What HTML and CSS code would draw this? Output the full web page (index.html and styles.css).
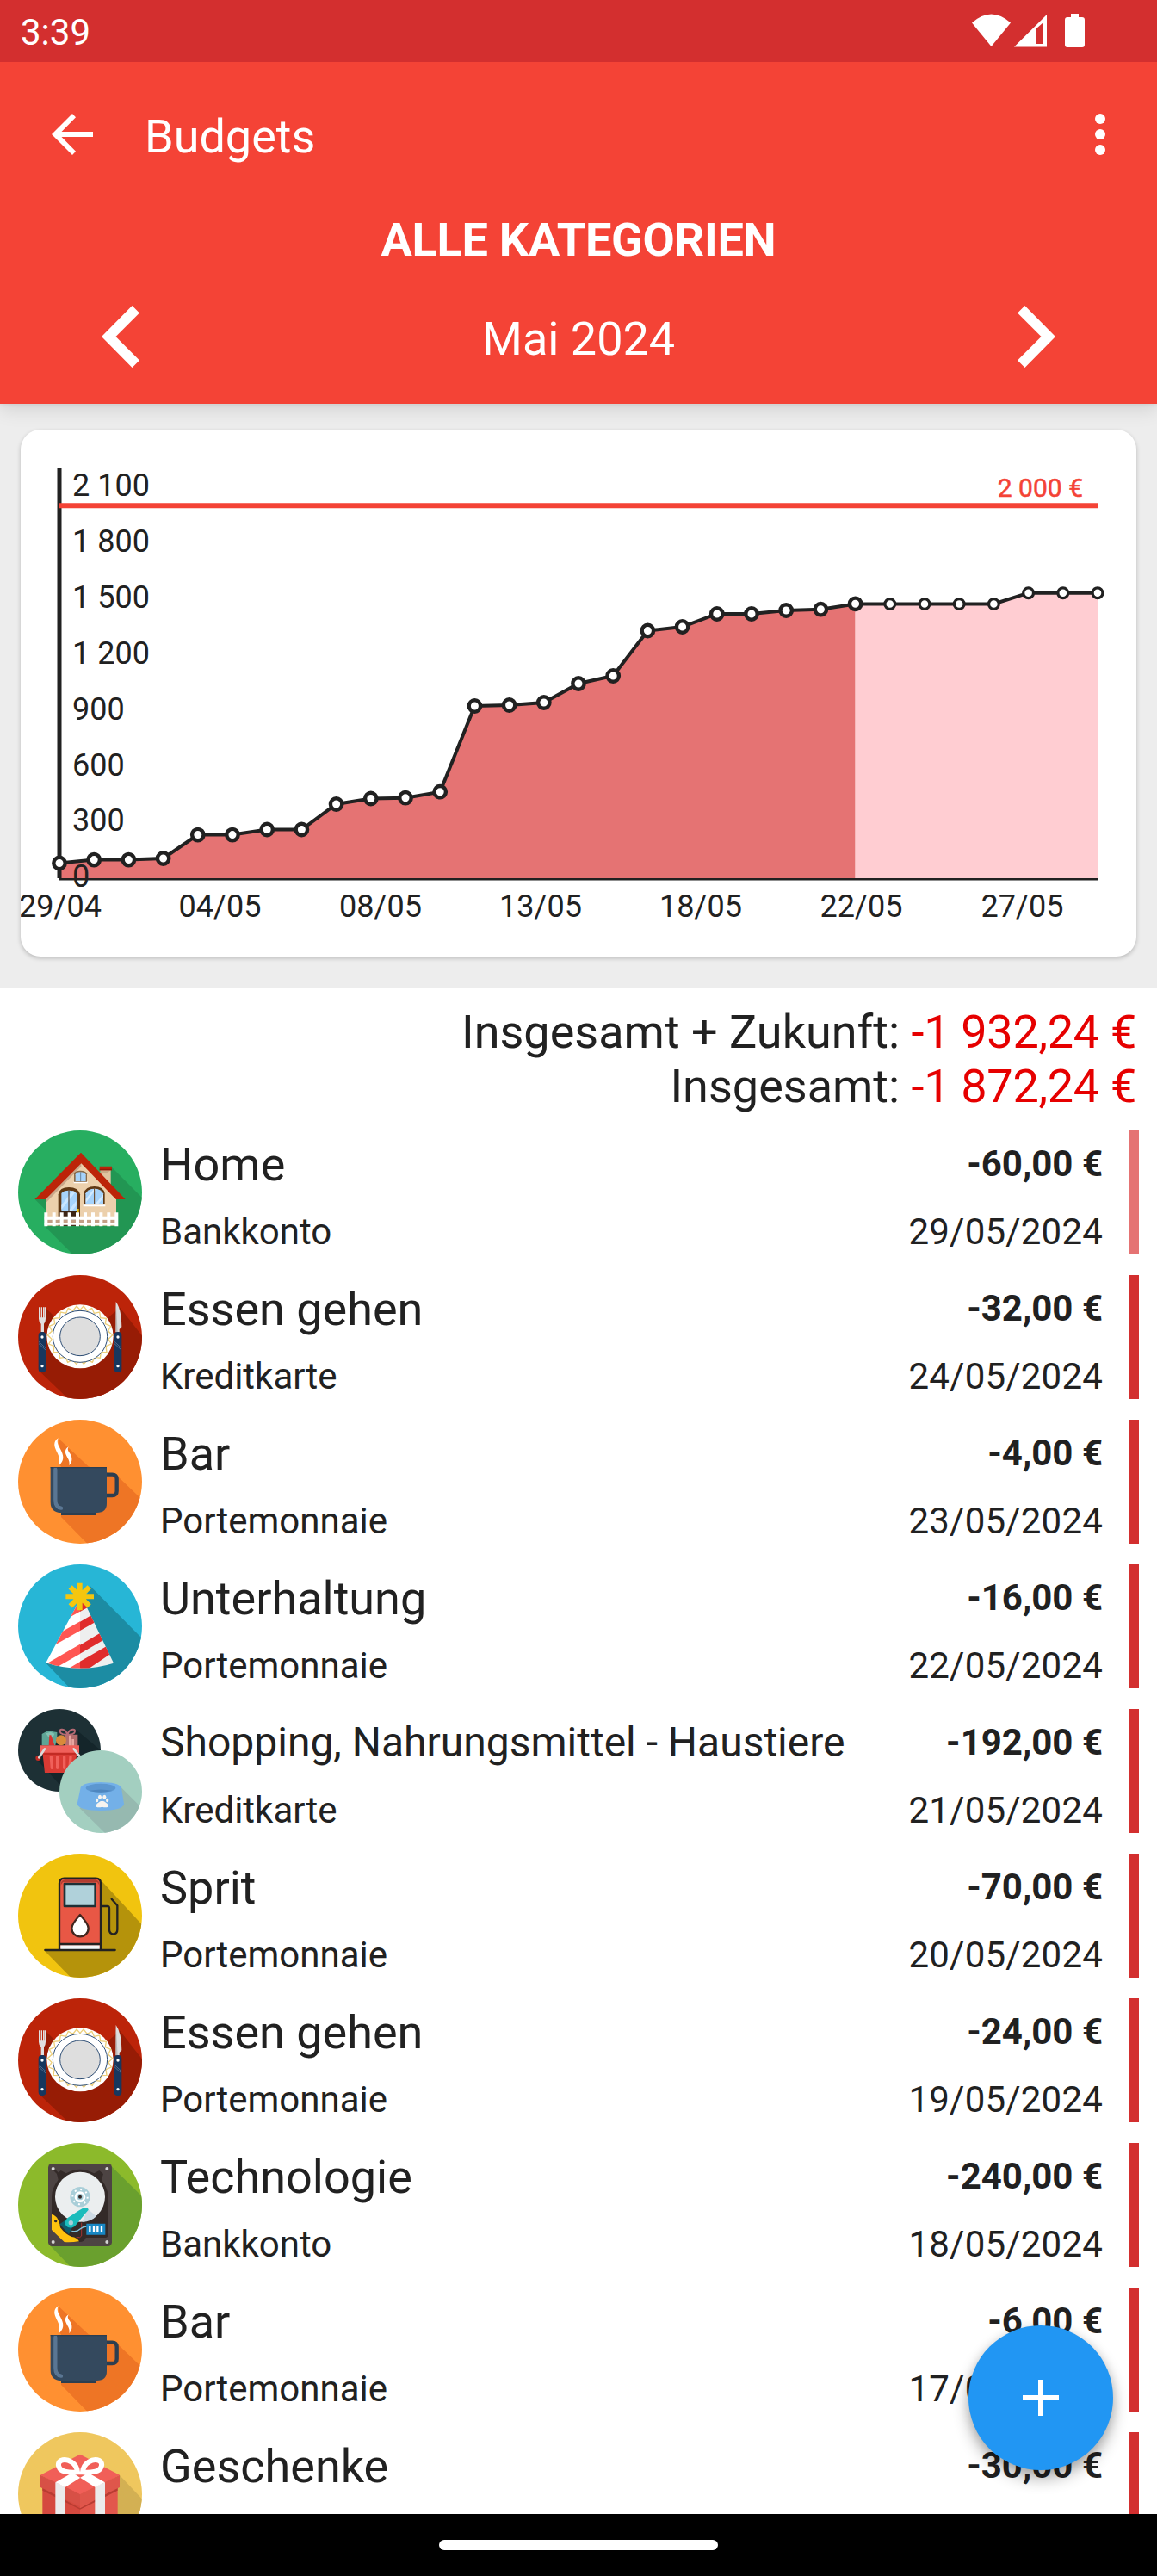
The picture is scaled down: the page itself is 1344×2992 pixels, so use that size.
FILE: index.html
```
<!DOCTYPE html>
<html lang="de">
	<head>
		<meta charset="utf-8">
		<title>Budgets</title>
		<link rel="stylesheet" href="styles.css">
	</head>
	<body>

		<!-- category icons -->
		<svg class="sprite">
			<symbol id="home" viewBox="63 39 432 432">
				<path fill="#27ae60" d="M63 39h432v432H63z"/>
				<path fill="#229653" d="M122 279l38 38v60l-5-5 105 105h240V278L388 166l-40 40z"/>
				<path fill="#e0c4a0" d="M350 176h36v52l-36-34z"/>
				<path fill="#c9ab88" d="M350 178h36l-16 12-20-4z"/>
				<path fill="#bc2409" d="M347 164h43v14h-43z"/>
				<path fill="#8f1c08" d="M347 173h43v5h-43z"/>
				<path fill="#ecd0ac" d="M283 150L160 273v98h245v-98z"/>
				<path fill="#c9a78a" d="M283 152L160 277v14l123-127z"/>
				<path fill="#bc2409" d="M282 116L121 279h38L283 154l121 125h33z"/>
				<path fill="#603813" d="M203 371V262q4-25 37-25t39 25v109z"/>
				<path fill="#3c2415" d="M209 320h65v51h-65z"/>
				<path fill="#a6d3fb" d="M214 320v-62q7-10 26-10t27 10v62z"/>
				<path fill="#c9e6ff" d="M214 300l38-50 12 3-50 62zM238 320l28-36v16l-16 20z"/>
				<path fill="none" stroke="#3c2415" stroke-width="3" d="M240 249v71"/>
				<path fill="#f1c40f" d="M269 312h6v14h-6z"/>
				<path fill="#603813" d="M292 298v-40q6-24 37-24t36 24v40z"/>
				<path fill="#a6d3fb" d="M298 294v-35q8-17 31-17t31 17v35z"/>
				<path fill="#d2eaff" d="M299 278l28-36 8 1-36 48zM333 294l27-32v12l-16 20z"/>
				<path fill="none" stroke="#603813" stroke-width="3" d="M329 241v54"/>
				<path fill="#fff" d="M290 298h77v6h-77zM257 217h48v6h-48z"/>
				<path fill="#8a6a48" d="M258 218v-28q3-11 22-11t23 11v28z"/>
				<path fill="#a6d3fb" d="M263 216v-23q3-9 17-9t19 9v23z"/>
				<path fill="none" stroke="#4d5d6b" stroke-width="2" d="M281 184v33"/>
				<path fill="#c49f86" d="M165 350h238v10H165z"/>
				<path fill="#fff" d="M155 338h256v12H155zM155 360h256v8H155z"/>
				<path fill="none" stroke="#fff" stroke-width="12" d="M160 325v48M188 325v48M215 325v48M242 325v48M270 325v48M297 325v48M324 325v48M352 325v48M379 325v48M406 325v48"/>
			</symbol>

			<symbol id="dining" viewBox="63 543 432 432">
				<path fill="#bc2409" d="M63 543h432v432H63z"/>
				<path fill="#971c05" d="M158 656l120 120 140-120 82 105v230H255L138 878z"/>
				<path fill="#e0e0e0" d="M135 655h5v36h3v-36h4v36h3v-36h4v36h1v-36h4v40q0 12-6 18v28h-10v-28q-8-6-8-18z"/>
				<path fill="#ddd" d="M404 636q20 28 20 88l-8 8v10h-12z"/>
				<path fill="#bbb" d="M404 636l6 106h-7z"/>
				<rect x="134" y="741" width="26" height="141" rx="12" fill="#17375e"/>
				<rect x="398" y="741" width="26" height="141" rx="12" fill="#17375e"/>
				<path stroke="#7187a3" stroke-width="2" d="M135 775l24 22M135 782l24 22M399 775l24 22M399 782l24 22"/>
				<g fill="#fff"><circle cx="147" cy="759" r="5"/><circle cx="147" cy="860" r="5"/><circle cx="411" cy="759" r="5"/><circle cx="411" cy="860" r="5"/></g>
				<ellipse cx="279" cy="757" rx="116" ry="111" fill="#fff"/>
				<path fill="none" stroke="#edcf7a" stroke-width="4" d="M279 664l12-13 13 16 16-9 8 18 19-4 3 20 20 2-3 19 19 8-9 17 15 14-14 14 10 17-19 8 3 20-20 1-3 20-19-3-8 18-17-8-13 14-13-14-13 14-13-14-17 8-8-18-19 3-3-20-20-1 3-20-19-8 10-17-14-14 15-14-9-17 19-8-3-19 20-2 3-20 19 4 8-18 16 9 13-16z"/>
				<ellipse cx="279" cy="757" rx="95" ry="90" fill="#fff" stroke="#2d4d74" stroke-width="3"/>
				<ellipse cx="279" cy="757" rx="70" ry="67" fill="#dedede" stroke="#2d4d74" stroke-width="3"/>
			</symbol>

			<symbol id="bar" viewBox="63 27 432 432">
				<path fill="#ff9031" d="M63 27h432v432H63z"/>
				<path fill="#ee7525" d="M204 92l104 98 64 20 42 18 90 86v160H319l-106-108V190l-8-8 8-30z"/>
				<path fill="#ee7525" d="M372 222h28v64h-28z"/>
				<path fill="#fff" d="M203 91c-18 12-15 28-6 46 9 17 12 28 9 49 16-14 17-29 9-47-9-21-20-30-12-48z"/>
				<path fill="#fff" d="M239 121c-15 10-13 22-6 34 8 14 10 20 8 31 10-10 12-22 6-36-7-12-15-17-8-29z"/>
				<path fill="none" stroke="#2c3e50" stroke-width="13" d="M371 218h20q16 0 16 16v41q0 16-16 16h-20"/>
				<path fill="#2c3e50" d="M213 345h121v15H213z"/>
				<path fill="#34495e" d="M176 192h196v126q0 33-34 33H214q-38 0-38-37z"/>
				<path fill="#2c3e50" d="M176 192h196v4H176z"/>
				<path fill="none" stroke="#5a7693" stroke-width="13" stroke-linecap="round" d="M193 200v106q0 27 20 29"/>
				<path fill="#34495e" d="M186 192h14v3h-14z"/>
			</symbol>

			<symbol id="party" viewBox="63 531 432 432">
				<path fill="#27b6d6" d="M63 531h432v432H63z"/>
				<path fill="#1c8ca3" d="M314 606l190 192v190H268L161 876l120-180z"/>
				<clipPath id="cone"><path d="M278 655L160 874q55 19 118 19t118-18L290 655z"/></clipPath>
				<g clip-path="url(#cone)">
					<path fill="#fff" d="M150 640h130v260H150z"/>
					<path fill="#eeefef" d="M279 640h130v260H279z"/>
					<path fill="#ff5752" d="M230 722l49-27v-50h-49zM190 780l89-50v32l-110 62zM150 884l129-75v34l-100 57zM240 893l39-23v30h-39z"/>
					<path fill="#e02c2c" d="M279 696l32-18v-38h-32zM279 731l60-35v32l-60 34zM279 812l90-54v32l-90 52zM279 869l115-66v34l-92 62h-23z"/>
				</g>
				<g stroke="#f5c60f" stroke-width="18">
					<path d="M278 596v95M229 643h98M245 610l66 66M311 610l-66 66"/>
				</g>
				<circle cx="278" cy="643" r="20" fill="#f5c60f"/>
			</symbol>

			<!-- category with its subcategory over it -->
			<symbol id="pets" viewBox="63 45 432 432">
				<clipPath id="back"><circle cx="207" cy="189" r="144"/></clipPath>
				<clipPath id="front"><circle cx="351" cy="333" r="144"/></clipPath>
				<g clip-path="url(#back)">
					<path fill="#1d3035" d="M63 45h288v288H63z"/>
					<path fill="#14252a" d="M124 216l100 110h140V200l-98-82z"/>
					<path fill="#5fa596" d="M146 172v-40l15-8 12-4 12 4 14 2v14l-6 32z"/>
					<path fill="#84c2b3" d="M160 130l16-5 14 6-6 14-16-4z"/>
					<path fill="#d8322f" d="M172 136h6l12 36h-20z"/>
					<path fill="#b46c6c" d="M228 134h43v42h-43z"/>
					<path fill="#e8a6a0" d="M240 134h9v42h-9zM250 150h8v26h-8z"/>
					<path fill="none" stroke="#b56a74" stroke-width="6" d="M235 134c-8-24-34-22-24-6q10 8 24 6c8-24 34-22 24-6q-10 8-24 6"/>
					<circle cx="213" cy="154" r="18" fill="#d98a3a"/>
					<path fill="#d93a33" d="M148 196h120l-8 71H156z"/>
					<path fill="#f0605a" d="M138 172h138v26H138z"/>
					<path fill="#c22b24" d="M148 197h122v7H148z"/>
					<path stroke="#f0605a" stroke-width="10" stroke-linecap="round" d="M178 212l3 38M200 212v38M224 212v38M246 212l-3 38"/>
					<circle cx="133" cy="216" r="9" fill="#c22b24"/>
					<path stroke="#dcdcdc" stroke-width="8" stroke-linecap="round" d="M156 184l-20 30M257 184l24 30"/>
				</g>
				<g clip-path="url(#front)">
					<path fill="#a3cfc0" d="M207 189h288v288H207z"/>
					<path fill="#96b9b0" d="M422 318l78 78v90H375l-98-96z"/>
					<path fill="#73b0e8" d="M281 318q10-18 70-18t72 18l9 58q-4 23-81 23t-82-23z"/>
					<ellipse cx="351" cy="320" rx="52" ry="15" fill="#5c97d0"/>
					<path fill="#4d86bf" d="M310 330q41-9 82 0-41 10-82 0z"/>
					<g fill="#f7f4f0"><ellipse cx="348" cy="352" rx="6" ry="8"/><ellipse cx="364" cy="352" rx="6" ry="8"/><ellipse cx="338" cy="363" rx="5" ry="7"/><ellipse cx="374" cy="363" rx="5" ry="7"/>
						<path d="M336 386q-2-10 6-14 14-13 28 0 8 4 6 14-7 3-20 0-13 3-20 0z"/></g>
				</g>
			</symbol>

			<symbol id="fuel" viewBox="63 39 432 432">
				<path fill="#f1c40f" d="M63 39h432v432H63z"/>
				<path fill="#b5930b" d="M350 130l150 162v190H258L154 376h50z"/>
				<path fill="#e85745" stroke="#222" stroke-width="7" d="M207 374V142q0-17 17-17h110q17 0 17 17v232z"/>
				<path fill="#b23c30" d="M211 150q0-18 16-21h104q16 3 16 21l-8-12H219z"/>
				<path fill="#f5f8fa" d="M211 358h136v14H211z"/>
				<path fill="#b0d1da" stroke="#1e3036" stroke-width="8" stroke-linejoin="round" d="M225 144h107v78H225z"/>
				<path fill="none" stroke="#222" stroke-width="7" d="M207 354h144"/>
				<path fill="#fff" stroke="#42261f" stroke-width="7" stroke-linejoin="round" d="M279 252q29 32 29 47a29 29 0 0 1-58 0q0-15 29-47z"/>
				<path fill="none" stroke="#222" stroke-width="7" stroke-linecap="round" stroke-linejoin="round" d="M355 222h19q7 0 7 8v73q0 16 14 16t14-16v-83l-20-23M157 375h244"/>
			</symbol>

			<symbol id="tech" viewBox="63 57 432 432">
				<path fill="#8cba2b" d="M63 57h432v432H63z"/>
				<path fill="#6aa02e" d="M388 138l110 108v260H262l-88-92z"/>
				<rect x="168" y="129" width="222" height="288" rx="14" fill="#4d4443"/>
				<path fill="#332a28" d="M198 165l14-12 18 10q49-28 98 0l18-10 14 12-6 20q23 30 23 60v130q0 12-10 12h-68q-4 15-22 15h-40l-57-60V245q0-30 23-60z"/>
				<path stroke="#332a28" stroke-width="7" d="M185 147l20 20"/>
				<g fill="#d5d5d5"><circle cx="185" cy="147" r="6"/><circle cx="373" cy="147" r="6"/><circle cx="185" cy="402" r="6"/><circle cx="373" cy="402" r="6"/></g>
				<circle cx="279" cy="245" r="87" fill="#ebeeef"/>
				<path fill="#cfdbe5" d="M306 287l30 26q-22 20-50 19z"/>
				<circle cx="279" cy="245" r="35" fill="#a9ced8"/>
				<circle cx="279" cy="245" r="26" fill="none" stroke="#fff" stroke-width="6" stroke-dasharray="6 14.4"/>
				<circle cx="279" cy="245" r="19" fill="#fff"/>
				<circle cx="279" cy="245" r="11" fill="#a9ced8"/>
				<circle cx="279" cy="245" r="6" fill="#332a28"/>
				<path fill="#0d5a6b" d="M208 340l26-18 20 26-14 28z"/>
				<path fill="#ffc20e" d="M180 306q16 4 22 18 8 16 8 28 18 24 40 32 18 2 26 16-30 4-52 2l-44-42z"/>
				<circle cx="194" cy="329" r="5" fill="#332a28"/>
				<path fill="#1bbcbc" d="M306 284q-14-4-30 8l-40 26q-14 12-6 28 12 12 30 2l48-58z"/>
				<circle cx="247" cy="335" r="8" fill="#a9ced8"/>
				<path fill="none" stroke="#a33434" stroke-width="3" d="M284 335v46l-6 5h-12"/>
				<path fill="none" stroke="#7fc0d8" stroke-width="4" d="M250 364q18 4 28-6 12-10 24-10"/>
				<path fill="#1787c4" d="M301 338h66v39h-66z"/>
				<path stroke="#fff" stroke-width="7" d="M313 346v22M327 346v22M340 346v22M354 346v22"/>
			</symbol>

			<symbol id="gift" viewBox="63 1065 432 432">
				<path fill="#efc75e" d="M63 1065h432v432H63z"/>
				<path fill="#d3b053" d="M417 1215l90 95v190H300z"/>
				<path fill="#d5493f" d="M148 1258l131 60v190H148z"/>
				<path fill="#e2574c" d="M410 1258l-131 60v190h131z"/>
				<path fill="#b83c32" d="M148 1258l131 72 131-72v10l-131 66-131-66z"/>
				<path fill="#f15f58" d="M279 1142l138 72-138 72-138-72z"/>
				<path fill="#d75046" d="M141 1214l138 66v44l-138-67z"/>
				<path fill="#df564b" d="M417 1214l-138 66v44l138-67z"/>
				<path fill="#ebebeb" d="M193 1240l35 14v250h-35zM366 1240l-35 14v250h35z"/>
				<path fill="#f15f58" d="M228 1254l51-30 52 30-52 27z"/>
				<path fill="#fff" d="M193 1240l70-40 35 12-70 44zM366 1240l-70-40-35 12 70 44z"/>
				<path fill="#f15f58" stroke="#fff" stroke-width="18" d="M270 1204c-2-32-36-50-58-40-16 8-8 34 14 38q24 5 44 2zM288 1204c2-32 36-50 58-40 16 8 8 34-14 38q-24 5-44 2z"/>
			</symbol>
		</svg>

		<div class="screen">

			<header class="header">
				<div class="statusbar">
					<span>3:39</span>
					<svg class="status-icons" width="132" height="40" viewBox="1129 15 132 40">
						<path fill="#fff" d="M1129 26.500q22.500-20 45 0l-22.500 27.500z"/>
						<path fill="#fff" fill-rule="evenodd" d="M1178 54.500h38V17zM1204 33l8-7v25h-8z"/>
						<path fill="#fff" d="M1244 16h9v4h4q3 0 3 3v29q0 3-3 3h-17q-3 0-3-3V23q0-3 3-3h4z"/>
					</svg>
				</div>
				<div class="toolbar">
					<svg width="48" height="48" viewBox="0 0 48 48">
						<path fill="#fff" d="M48 21H11.500L28 4.200 24 0 0 24l24 24 4-4.200L11.500 27H48z"/>
					</svg>
					<h1 class="title">Budgets</h1>
					<svg width="12" height="48" viewBox="0 0 12 48">
						<g fill="#fff"><circle cx="6" cy="6" r="6"/><circle cx="6" cy="24" r="6"/><circle cx="6" cy="42" r="6"/></g>
					</svg>
				</div>
				<div class="category">ALLE KATEGORIEN</div>
				<div class="month">
					<svg width="44" height="72" viewBox="0 0 44 72">
						<path fill="#fff" d="M35.500 0L44 8.500 16.500 36 44 63.500 35.500 72 0 36z"/>
					</svg>
					<span>Mai 2024</span>
					<svg width="44" height="72" viewBox="0 0 44 72">
						<path fill="#fff" d="M8.500 0L0 8.500 27.500 36 0 63.500 8.500 72 44 36z"/>
					</svg>
				</div>
			</header>

			<section class="chart-area">
				<div class="card">
					<svg class="chart" width="1296" height="612" viewBox="24 499 1296 612">
						<path fill="#e57373" d="M69 1021V1002.500L109.200 998.600 149.400 998.600 189.600 997 229.800 969.600 270 969.600 310.200 963.500 350.400 963.500 390.600 934 430.800 927.500 471 926.700 511.200 919.700 551.400 820 591.600 819 631.800 816 672 794 712.200 785 752.400 732.500 792.600 728 832.800 713 873 713 913.200 709 953.400 707.700 993.600 701.500V1021z"/>
						<path fill="#ffcdd2" d="M993.600 1021V701.500H1154.400L1194.600 688.700H1275V1021z"/>
						<path class="axis-y" d="M69 544v476"/>
						<path class="axis-x" d="M69 1021.200h1206"/>
						<path class="limit" d="M69 587.200h1206"/>
						<path class="line" d="M69 1002.500L109.200 998.600 149.400 998.600 189.600 997 229.800 969.600 270 969.600 310.200 963.500 350.400 963.500 390.600 934 430.800 927.500 471 926.700 511.200 919.700 551.400 820 591.600 819 631.800 816 672 794 712.200 785 752.400 732.500 792.600 728 832.800 713 873 713 913.200 709 953.400 707.700 993.600 701.500H1154.400L1194.600 688.700H1275"/>
						<g class="dots">
							<circle cx="69" cy="1002.500" r="6.700"/><circle cx="109.200" cy="998.600" r="6.700"/><circle cx="149.400" cy="998.600" r="6.700"/><circle cx="189.600" cy="997" r="6.700"/>
							<circle cx="229.800" cy="969.600" r="6.700"/><circle cx="270" cy="969.600" r="6.700"/><circle cx="310.200" cy="963.500" r="6.700"/><circle cx="350.400" cy="963.500" r="6.700"/>
							<circle cx="390.600" cy="934" r="6.700"/><circle cx="430.800" cy="927.500" r="6.700"/><circle cx="471" cy="926.700" r="6.700"/><circle cx="511.200" cy="919.700" r="6.700"/>
							<circle cx="551.400" cy="820" r="6.700"/><circle cx="591.600" cy="819" r="6.700"/><circle cx="631.800" cy="816" r="6.700"/><circle cx="672" cy="794" r="6.700"/>
							<circle cx="712.200" cy="785" r="6.700"/><circle cx="752.400" cy="732.500" r="6.700"/><circle cx="792.600" cy="728" r="6.700"/><circle cx="832.800" cy="713" r="6.700"/>
							<circle cx="873" cy="713" r="6.700"/><circle cx="913.200" cy="709" r="6.700"/><circle cx="953.400" cy="707.700" r="6.700"/><circle cx="993.600" cy="701.300" r="6.700"/>
						</g>
						<g class="dots future">
							<circle cx="1033.800" cy="701.500" r="5.900"/><circle cx="1074" cy="701.500" r="5.900"/><circle cx="1114.200" cy="701.500" r="5.900"/><circle cx="1154.400" cy="701.500" r="5.900"/>
							<circle cx="1194.600" cy="688.700" r="5.900"/><circle cx="1234.800" cy="688.700" r="5.900"/><circle cx="1275" cy="688.700" r="5.900"/>
						</g>
						<g class="labels">
							<text x="84" y="576">2 100</text>
							<text x="84" y="641">1 800</text>
							<text x="84" y="706">1 500</text>
							<text x="84" y="771">1 200</text>
							<text x="84" y="835.500">900</text>
							<text x="84" y="900.500">600</text>
							<text x="84" y="965">300</text>
							<text x="84" y="1030">0</text>
						</g>
						<g class="labels days">
							<text x="70" y="1065">29/04</text>
							<text x="255.500" y="1065">04/05</text>
							<text x="442" y="1065">08/05</text>
							<text x="628" y="1065">13/05</text>
							<text x="814" y="1065">18/05</text>
							<text x="1000.500" y="1065">22/05</text>
							<text x="1187.500" y="1065">27/05</text>
						</g>
						<text class="limit-label" x="1258" y="577">2 000 €</text>
					</svg>
				</div>
			</section>

			<section class="totals">
				<div>Insgesamt + Zukunft: <span class="red">-1 932,24 €</span></div>
				<div>Insgesamt: <span class="red">-1 872,24 €</span></div>
			</section>

			<ul class="list">
				<li>
					<svg class="icon"><use href="#home"/></svg>
					<div class="info"><h2>Home</h2><p>Bankkonto</p></div>
					<div class="value"><b>-60,00 €</b><p>29/05/2024</p></div>
					<i class="mark planned"></i>
				</li>
				<li>
					<svg class="icon"><use href="#dining"/></svg>
					<div class="info"><h2>Essen gehen</h2><p>Kreditkarte</p></div>
					<div class="value"><b>-32,00 €</b><p>24/05/2024</p></div>
					<i class="mark"></i>
				</li>
				<li>
					<svg class="icon"><use href="#bar"/></svg>
					<div class="info"><h2>Bar</h2><p>Portemonnaie</p></div>
					<div class="value"><b>-4,00 €</b><p>23/05/2024</p></div>
					<i class="mark"></i>
				</li>
				<li>
					<svg class="icon"><use href="#party"/></svg>
					<div class="info"><h2>Unterhaltung</h2><p>Portemonnaie</p></div>
					<div class="value"><b>-16,00 €</b><p>22/05/2024</p></div>
					<i class="mark"></i>
				</li>
				<li>
					<svg class="icon double"><use href="#pets"/></svg>
					<div class="info"><h2 class="long">Shopping, Nahrungsmittel - Haustiere</h2><p>Kreditkarte</p></div>
					<div class="value"><b>-192,00 €</b><p>21/05/2024</p></div>
					<i class="mark"></i>
				</li>
				<li>
					<svg class="icon"><use href="#fuel"/></svg>
					<div class="info"><h2>Sprit</h2><p>Portemonnaie</p></div>
					<div class="value"><b>-70,00 €</b><p>20/05/2024</p></div>
					<i class="mark"></i>
				</li>
				<li>
					<svg class="icon"><use href="#dining"/></svg>
					<div class="info"><h2>Essen gehen</h2><p>Portemonnaie</p></div>
					<div class="value"><b>-24,00 €</b><p>19/05/2024</p></div>
					<i class="mark"></i>
				</li>
				<li>
					<svg class="icon"><use href="#tech"/></svg>
					<div class="info"><h2>Technologie</h2><p>Bankkonto</p></div>
					<div class="value"><b>-240,00 €</b><p>18/05/2024</p></div>
					<i class="mark"></i>
				</li>
				<li>
					<svg class="icon"><use href="#bar"/></svg>
					<div class="info"><h2>Bar</h2><p>Portemonnaie</p></div>
					<div class="value"><b>-6,00 €</b><p>17/05/2024</p></div>
					<i class="mark"></i>
				</li>
				<li>
					<svg class="icon"><use href="#gift"/></svg>
					<div class="info"><h2>Geschenke</h2></div>
					<div class="value"><b>-30,00 €</b></div>
					<i class="mark"></i>
				</li>
			</ul>

			<div class="navbar"><div class="handle"></div></div>

			<!-- add button -->
			<div class="fab">
				<svg width="42" height="42" viewBox="0 0 42 42"><path fill="#fff" d="M18 0h6v18h18v6H24v18h-6V24H0v-6h18z"/></svg>
			</div>
		</div>

	</body>
</html>
```
FILE: styles.css
```
* {
	margin: 0;
	padding: 0;
	box-sizing: border-box;
}
body {
	font-family: Roboto, "Liberation Sans", sans-serif;
	color: #212121;
	background-color: #fff;
}
svg {
	display: block;
	flex: none;
}
.sprite {
	position: absolute;
	width: 0;
	height: 0;
}
.screen {
	width: 1344px;
	height: 2992px;
	display: flex;
	flex-direction: column;
	position: relative;
	overflow: hidden;
}

/* header */
.header {
	height: 469px;
	flex: none;
	background-color: #f44336;
	color: #fff;
	position: relative;
	z-index: 1;
	box-shadow: 0 8px 20px rgba(0,0,0,.1), 0 2px 4px rgba(0,0,0,.05);
}
.statusbar {
	height: 72px;
	background-color: #d32f2f;
	display: flex;
	justify-content: space-between;
	align-items: center;
	padding: 3px 83px 0 24px;
	font-size: 42px;
}
.status-icons {
	margin-top: -5px;
}
.toolbar {
	height: 168px;
	display: flex;
	align-items: center;
	padding: 0 60px;
}
.title {
	flex: 1;
	padding: 5px 0 0 60px;
	font-size: 54px;
	font-weight: 400;
}
.category {
	height: 64px;
	line-height: 64px;
	margin-top: 7px;
	font-size: 54px;
	font-weight: 700;
	letter-spacing: -.25px;
	text-align: center;
}
.month {
	height: 158px;
	display: flex;
	justify-content: space-between;
	align-items: center;
	padding: 2px 118px 0;
	font-size: 54px;
}
.month span {
	padding-top: 4px;
}

/* chart */
.chart-area {
	height: 678px;
	flex: none;
	padding: 30px 24px 0;
	background-color: #ededed;
}
.card {
	height: 612px;
	border-radius: 23px;
	background-color: #fff;
	overflow: hidden;
	box-shadow: 0 2px 5px rgba(0,0,0,.22);
}
.axis-y {
	stroke: #212121;
	stroke-width: 5;
}
.axis-x {
	stroke: #212121;
	stroke-width: 2.6;
}
.limit {
	stroke: #f44336;
	stroke-width: 6;
}
.line {
	fill: none;
	stroke: #212121;
	stroke-width: 4;
}
.dots {
	fill: #fff;
	stroke: #212121;
	stroke-width: 4.4;
}
.future {
	stroke-width: 3.2;
}
.labels {
	font-size: 36px;
	fill: #212121;
}
.days {
	text-anchor: middle;
}
.limit-label {
	font-size: 30px;
	fill: #f44336;
	stroke: #f44336;
	stroke-width: .5;
	text-anchor: end;
}

/* totals */
.totals {
	height: 154px;
	flex: none;
	padding: 20px 24px 0 0;
	font-size: 54px;
	line-height: 63px;
	text-align: right;
}
.red {
	color: #e60000;
	letter-spacing: -.3px;
}

/* transactions */
.list {
	flex: 1;
	min-height: 0;
	overflow: hidden;
	list-style: none;
}
.list li {
	height: 168px;
	padding: 12px 21px;
	display: flex;
}
.icon {
	width: 144px;
	height: 144px;
	border-radius: 50%;
	overflow: hidden;
}
.double {
	border-radius: 0;
}
.info {
	flex: 1;
	padding: 8px 0 0 21px;
	white-space: nowrap;
}
.info h2 {
	font-size: 54px;
	font-weight: 400;
	line-height: 63px;
}
.info .long {
	font-size: 48px;
	line-height: 61px;
	padding-bottom: 2px;
}
.list p {
	margin-top: 18px;
	font-size: 42px;
	line-height: 57px;
}
.value {
	padding-top: 10px;
	text-align: right;
}
.value b {
	display: block;
	font-size: 42px;
	line-height: 57px;
}
.list .value p {
	margin-top: 22px;
	letter-spacing: .2px;
}
.mark {
	width: 12px;
	height: 144px;
	flex: none;
	margin-left: 30px;
	background-color: #d32f2f;
}
.planned {
	background-color: #e57373;
}

/* bottom */
.navbar {
	height: 72px;
	flex: none;
	background-color: #000;
	display: flex;
	align-items: center;
	justify-content: center;
}
.handle {
	width: 324px;
	height: 12px;
	border-radius: 6px;
	background-color: #fff;
}
.fab {
	width: 168px;
	height: 168px;
	position: absolute;
	right: 51px;
	bottom: 123px;
	border-radius: 50%;
	background-color: #2196f3;
	display: flex;
	align-items: center;
	justify-content: center;
	box-shadow: 0 10px 18px rgba(0,0,0,.3), 0 2px 12px rgba(0,0,0,.12);
}
```
